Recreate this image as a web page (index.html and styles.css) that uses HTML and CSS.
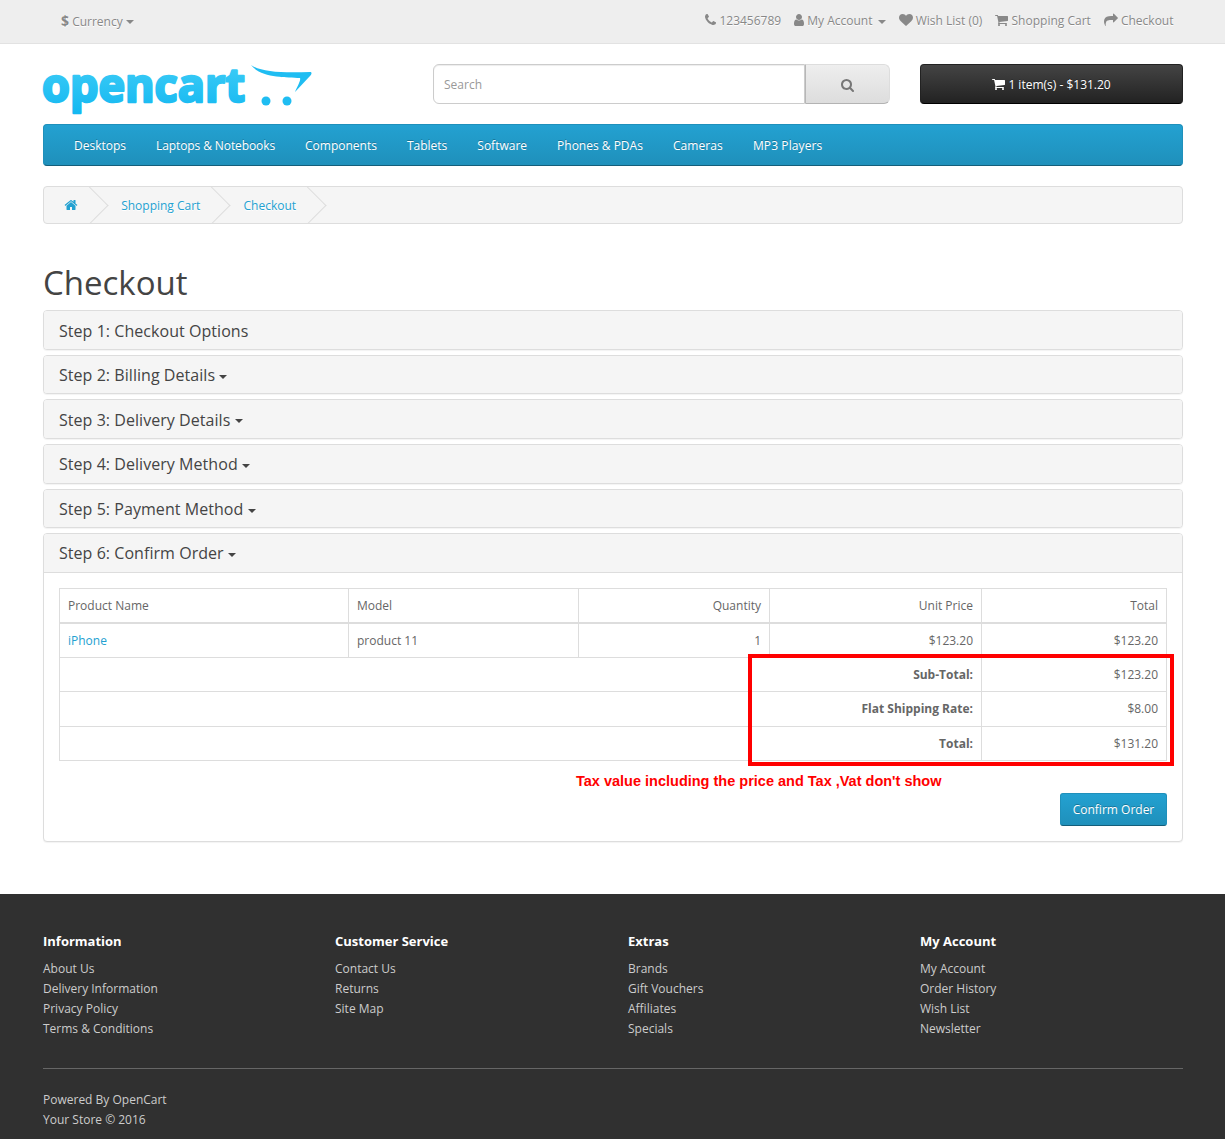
FILE: index.html
```html
<!DOCTYPE html>
<html lang="en">
<head>
    <meta charset="UTF-8">
    <meta name="viewport" content="width=device-width, initial-scale=1.0">
    <title>Checkout</title>
    <link rel="stylesheet" href="styles.css">
</head>
<body>
    <svg class="icon-defs" aria-hidden="true">
        <symbol id="i-phone" viewBox="192 0 1408 1792"><path d="M1600 1240q0 27-10 70.5t-21 68.5q-21 50-122 106-94 51-186 51-27 0-53-3.5t-57.5-12.5-47-14.5-55.5-20.5-49-18q-98-35-175-83-127-79-264-216t-216-264q-48-77-83-175-3-9-18-49t-20.5-55.5-14.5-47-12.5-57.5-3.5-53q0-92 51-186 56-101 106-122 25-11 68.5-21t70.5-10q14 0 21 3 18 6 53 76 11 19 30 54t35 63.5 31 53.5q3 4 17.5 25t21.5 35.5 7 28.5q0 20-28.5 50t-62 55-62 53-28.5 46q0 9 5 22.5t8.5 20.5 14 24 11.5 19q76 137 174 235t235 174q2 1 19 11.5t24 14 20.5 8.5 22.5 5q18 0 46-28.5t53-62 55-62 50-28.5q14 0 28.5 7t35.5 21.5 25 17.5q25 15 53.5 31t63.5 35 54 30q70 35 76 53 3 7 3 21z"/></symbol>
        <symbol id="i-user" viewBox="256 0 1280 1792"><path d="M1536 1399q0 109-62.5 187t-150.5 78h-854q-88 0-150.5-78t-62.5-187q0-85 8.5-160.5t31.5-152 58.5-131 94-89 134.5-34.5q131 128 313 128t313-128q76 0 134.5 34.5t94 89 58.5 131 31.5 152 8.5 160.5zm-256-887q0 159-112.5 271.5t-271.5 112.5-271.5-112.5-112.5-271.5 112.5-271.5 271.5-112.5 271.5 112.5 112.5 271.5z"/></symbol>
        <symbol id="i-heart" viewBox="0 0 1792 1792"><path d="M896 1664q-26 0-44-18l-624-602q-10-8-27.5-26t-55.5-65.5-68-97.5-53.5-121-23.5-138q0-220 127-344t351-124q62 0 126.5 21.5t120 58 95.5 68.5 76 68q36-36 76-68t95.5-68.5 120-58 126.5-21.5q224 0 351 124t127 344q0 221-229 450l-623 600q-18 18-44 18z"/></symbol>
        <symbol id="i-cart" viewBox="64 0 1664 1792"><path d="M704 1536q0 52-38 90t-90 38-90-38-38-90 38-90 90-38 90 38 38 90zm896 0q0 52-38 90t-90 38-90-38-38-90 38-90 90-38 90 38 38 90zm128-1088v512q0 24-16.5 42.5t-40.5 21.5l-1044 122q13 60 13 70 0 16-24 64h920q26 0 45 19t19 45-19 45-45 19h-1024q-26 0-45-19t-19-45q0-11 8-31.5t16-36 21.5-40 15.5-29.5l-177-823h-204q-26 0-45-19t-19-45 19-45 45-19h256q16 0 28.5 6.5t19.5 15.5 13 24.5 8 26 5.5 29.5 4.5 26h1201q26 0 45 19t19 45z"/></symbol>
        <symbol id="i-share" viewBox="0 0 1792 1792"><path d="M1792 640q0 26-19 45l-512 512q-19 19-45 19t-45-19-19-45v-256h-224q-98 0-175.5 6t-154 21.5-133 42.5-105.5 69.5-80 101-48.5 138.5-17.5 181q0 55 5 123 0 6 2.5 23.5t2.5 26.5q0 15-8.5 25t-23.5 10q-16 0-28-17-7-9-13-22t-13.5-30-10.5-24q-127-285-127-451 0-199 53-333 162-403 875-403h224v-256q0-26 19-45t45-19 45 19l512 512q19 19 19 45z"/></symbol>
        <symbol id="i-search" viewBox="64 0 1664 1792"><path d="M1216 832q0-185-131.5-316.5t-316.5-131.5-316.5 131.5-131.5 316.5 131.5 316.5 316.5 131.5 316.5-131.5 131.5-316.5zm512 832q0 52-38 90t-90 38q-54 0-90-38l-343-342q-179 124-399 124-143 0-273.5-55.5t-225-150-150-225-55.5-273.5 55.5-273.5 150-225 225-150 273.5-55.5 273.5 55.5 225 150 150 225 55.5 273.5q0 220-124 399l343 343q37 37 37 90z"/></symbol>
        <symbol id="i-home" viewBox="64 0 1664 1792"><path d="M1472 992v480q0 26-19 45t-45 19h-384v-384h-256v384h-384q-26 0-45-19t-19-45v-480q0-1 .5-3t.5-3l575-474 575 474q1 2 1 6zm223-69l-62 74q-8 9-21 11h-3q-13 0-21-7l-692-577-692 577q-12 8-24 7-13-2-21-11l-62-74q-8-10-7-23.5t11-21.5l719-599q32-26 76-26t76 26l244 204v-195q0-14 9-23t23-9h192q14 0 23 9t9 23v408l219 182q10 8 11 21.5t-7 23.5z"/></symbol>
    </svg>

    <!-- Top bar -->
    <nav id="top">
        <div class="container top-inner">
            <a class="currency" href="#"><strong class="currency-sign">$</strong> Currency <span class="caret"></span></a>
            <ul class="top-links">
                <li><svg class="icon icon-phone"><use href="#i-phone"/></svg> 123456789</li>
                <li><svg class="icon icon-user"><use href="#i-user"/></svg> My Account <span class="caret caret-account"></span></li>
                <li><svg class="icon icon-heart"><use href="#i-heart"/></svg> Wish List (0)</li>
                <li><svg class="icon icon-cart"><use href="#i-cart"/></svg> Shopping Cart</li>
                <li><svg class="icon icon-share"><use href="#i-share"/></svg> Checkout</li>
            </ul>
        </div>
    </nav>

    <!-- Header -->
    <header class="container site-header">
        <div class="logo-col">
            <svg class="logo" viewBox="0 0 270 50" role="img" aria-label="opencart">
                <defs>
                    <linearGradient id="logo-fill" gradientUnits="userSpaceOnUse" x1="0" y1="0" x2="0" y2="48">
                        <stop offset="0" stop-color="#3ccbf6"/>
                        <stop offset="1" stop-color="#14b8f1"/>
                    </linearGradient>
                </defs>
                <text class="logo-word" x="-1" y="37" textLength="203" lengthAdjust="spacingAndGlyphs">opencart</text>
                <path class="logo-cart" d="M208 0C218 7 238 8 267 7C269 7 269 9 267 11L252 27C255 20 258 15 257 13C243 12 218 13 208 0Z"/>
                <circle class="logo-cart" cx="223" cy="36" r="4.5"/>
                <circle class="logo-cart" cx="244" cy="36" r="4.5"/>
            </svg>
        </div>
        <div class="search-col">
            <div class="search">
                <input class="search-input" type="text" placeholder="Search">
                <button class="search-btn" title="Search"><svg class="icon icon-search"><use href="#i-search"/></svg></button>
            </div>
        </div>
        <div class="cart-col">
            <button class="cart-btn"><svg class="icon icon-cart"><use href="#i-cart"/></svg> 1 item(s) - $131.20</button>
        </div>
    </header>

    <div class="container">
        <!-- Main menu -->
        <nav id="menu">
            <a href="#">Desktops</a>
            <a class="menu-tight" href="#">Laptops &amp; Notebooks</a>
            <a href="#">Components</a>
            <a href="#">Tablets</a>
            <a href="#">Software</a>
            <a href="#">Phones &amp; PDAs</a>
            <a class="menu-wide" href="#">Cameras</a>
            <a class="menu-wide" href="#">MP3 Players</a>
        </nav>

        <ul class="breadcrumb">
            <li><a href="#"><svg class="icon icon-home"><use href="#i-home"/></svg></a></li>
            <li><a href="#">Shopping Cart</a></li>
            <li><a href="#">Checkout</a></li>
        </ul>

        <h1 class="page-title">Checkout</h1>

        <section class="panel"><h4 class="panel-title">Step 1: Checkout Options</h4></section>
        <section class="panel"><h4 class="panel-title">Step 2: Billing Details <span class="caret"></span></h4></section>
        <section class="panel"><h4 class="panel-title">Step 3: Delivery Details <span class="caret"></span></h4></section>
        <section class="panel"><h4 class="panel-title">Step 4: Delivery Method <span class="caret"></span></h4></section>
        <section class="panel"><h4 class="panel-title">Step 5: Payment Method <span class="caret"></span></h4></section>
        <section class="panel panel-open">
            <h4 class="panel-title">Step 6: Confirm Order <span class="caret"></span></h4>
            <div class="panel-body">
                <table class="order-table">
                    <colgroup>
                        <col class="col-name"><col class="col-model"><col class="col-qty"><col class="col-price"><col class="col-total">
                    </colgroup>
                    <thead>
                        <tr>
                            <td>Product Name</td>
                            <td>Model</td>
                            <td class="text-right">Quantity</td>
                            <td class="text-right">Unit Price</td>
                            <td class="text-right">Total</td>
                        </tr>
                    </thead>
                    <tbody>
                        <tr>
                            <td><a href="#">iPhone</a></td>
                            <td>product 11</td>
                            <td class="text-right">1</td>
                            <td class="text-right">$123.20</td>
                            <td class="text-right">$123.20</td>
                        </tr>
                    </tbody>
                    <tfoot>
                        <tr><td colspan="4" class="text-right"><strong>Sub-Total:</strong></td><td class="text-right">$123.20</td></tr>
                        <tr class="row-tall"><td colspan="4" class="text-right"><strong>Flat Shipping Rate:</strong></td><td class="text-right">$8.00</td></tr>
                        <tr><td colspan="4" class="text-right"><strong>Total:</strong></td><td class="text-right">$131.20</td></tr>
                    </tfoot>
                </table>
                <div class="highlight-box"></div>
                <p class="annotation">Tax value including the price and Tax ,Vat don't show</p>
                <div class="buttons">
                    <button class="confirm-btn">Confirm Order</button>
                </div>
            </div>
        </section>
    </div>

    <!-- Footer -->
    <footer class="site-footer">
        <div class="container">
            <div class="footer-cols">
                <div class="footer-col">
                    <h5>Information</h5>
                    <ul>
                        <li><a href="#">About Us</a></li>
                        <li><a href="#">Delivery Information</a></li>
                        <li><a href="#">Privacy Policy</a></li>
                        <li><a href="#">Terms &amp; Conditions</a></li>
                    </ul>
                </div>
                <div class="footer-col">
                    <h5>Customer Service</h5>
                    <ul>
                        <li><a href="#">Contact Us</a></li>
                        <li><a href="#">Returns</a></li>
                        <li><a href="#">Site Map</a></li>
                    </ul>
                </div>
                <div class="footer-col">
                    <h5>Extras</h5>
                    <ul>
                        <li><a href="#">Brands</a></li>
                        <li><a href="#">Gift Vouchers</a></li>
                        <li><a href="#">Affiliates</a></li>
                        <li><a href="#">Specials</a></li>
                    </ul>
                </div>
                <div class="footer-col">
                    <h5>My Account</h5>
                    <ul>
                        <li><a href="#">My Account</a></li>
                        <li><a href="#">Order History</a></li>
                        <li><a href="#">Wish List</a></li>
                        <li><a href="#">Newsletter</a></li>
                    </ul>
                </div>
            </div>
            <hr class="footer-rule">
            <p class="powered">Powered By <a href="#">OpenCart</a><br>Your Store &copy; 2016</p>
        </div>
    </footer>
</body>
</html>
```

FILE: styles.css
```css
/* General Reset */
* {
    box-sizing: border-box;
}

body {
    margin: 0;
    font-family: "Open Sans", sans-serif;
    font-size: 12px;
    line-height: 20px;
    color: #666;
    background-color: #fff;
}

a {
    color: #23a1d1;
    text-decoration: none;
}

ul {
    list-style: none;
    margin: 0;
    padding: 0;
}

button {
    font-family: inherit;
    cursor: pointer;
}

.container {
    width: 1170px;
    margin: 0 27px 0 28px;
    padding: 0 15px;
}

.icon-defs {
    display: none;
}

/* Icons */
.icon {
    display: inline-block;
    height: 14px;
    vertical-align: -2px;
    fill: currentColor;
}

.icon-phone { width: 11px; }
.icon-user { width: 10px; }
.icon-heart { width: 14px; }
.icon-cart { width: 13px; }
.icon-share { width: 14px; }
.icon-search { width: 13px; }
.icon-home { width: 14px; }

.caret {
    display: inline-block;
    width: 0;
    height: 0;
    vertical-align: middle;
    border-top: 4px solid;
    border-right: 4px solid transparent;
    border-left: 4px solid transparent;
}

/* Top Bar */
#top {
    background-color: #eee;
    border-bottom: 1px solid #e2e2e2;
    padding: 3px 0 4px;
    min-height: 44px;
    margin-bottom: 20px;
    color: #888;
    text-shadow: 0 1px 0 #fff;
}

.top-inner {
    display: flex;
    justify-content: space-between;
    align-items: center;
    height: 36px;
}

.currency {
    color: #888;
    margin-left: 18px;
}

.currency-sign {
    font-size: 14px;
}

.top-links {
    display: flex;
    gap: 13px;
    padding-right: 9.5px;
}

.caret-account {
    margin-left: 2px;
}

/* Header */
.site-header {
    display: grid;
    grid-template-columns: 390px 487px 293px;
    padding: 0;
    height: 60px;
}

.logo-col,
.search-col,
.cart-col {
    padding: 0 15px;
}

.logo {
    display: block;
    width: 270px;
    height: 50px;
    margin-top: 1px;
    overflow: visible;
}

.logo-word {
    font-family: "Open Sans", sans-serif;
    font-size: 46px;
    font-weight: 700;
    fill: url(#logo-fill);
    stroke: url(#logo-fill);
    stroke-width: 2.5px;
    stroke-linejoin: round;
}

.logo-cart {
    fill: #1fbdf2;
}

.search {
    display: flex;
    height: 40px;
}

.search-input {
    flex: 1;
    min-width: 0;
    padding: 10px;
    font-family: inherit;
    font-size: 12px;
    color: #555;
    border: 1px solid #ccc;
    border-radius: 6px 0 0 6px;
    box-shadow: inset 0 1px 1px rgba(0, 0, 0, 0.075);
    outline: none;
}

.search-input::placeholder {
    color: #999;
}

.search-btn {
    width: 85px;
    font-size: 15px;
    color: #777;
    background-image: linear-gradient(to bottom, #eee, #ddd);
    border: 1px solid #ddd;
    border-color: #ddd #ddd #b3b3b3 #b7b7b7;
    border-radius: 0 6px 6px 0;
    text-shadow: 0 1px 0 #fff;
}

.cart-btn {
    display: block;
    width: 100%;
    height: 40px;
    font-size: 12px;
    color: #fff;
    background-image: linear-gradient(to bottom, #444, #222);
    border: 1px solid #222;
    border-bottom-color: #000;
    border-radius: 4px;
    text-shadow: 0 -1px 0 rgba(0, 0, 0, 0.25);
}

/* Menu */
#menu {
    display: flex;
    gap: 30px;
    height: 42px;
    padding: 2px 30px 0;
    margin-bottom: 20px;
    align-items: center;
    background-color: #229ac8;
    background-image: linear-gradient(to bottom, #23a1d1, #1f90bb);
    border: 1px solid #1f90bb;
    border-bottom-color: #145e7a;
    border-radius: 4px;
}

#menu a {
    color: #fff;
    text-shadow: 0 -1px 0 rgba(0, 0, 0, 0.25);
}

#menu .menu-tight {
    letter-spacing: -0.1px;
}

#menu .menu-wide {
    letter-spacing: 0.1px;
}

/* Breadcrumb */
.breadcrumb {
    padding: 9px 0 7px;
    height: 38px;
    overflow: hidden;
    background-color: #f5f5f5;
    border: 1px solid #ddd;
    border-radius: 4px;
}

.breadcrumb li {
    display: inline-block;
    position: relative;
    padding: 0 20px;
    white-space: nowrap;
    text-shadow: 0 1px 0 #fff;
}

.breadcrumb li::after {
    content: '';
    display: block;
    position: absolute;
    top: -4px;
    right: -5px;
    width: 26px;
    height: 26px;
    border-right: 1px solid #ddd;
    border-bottom: 1px solid #ddd;
    transform: rotate(-45deg);
}

.page-title {
    margin: 41px 0 9px;
    font-size: 33px;
    font-weight: 400;
    line-height: 1.1;
    color: #444;
}

/* Panels */
.panel {
    margin-bottom: 5px;
    border: 1px solid #ddd;
    border-radius: 4px;
    box-shadow: 0 1px 1px rgba(0, 0, 0, 0.05);
    background-color: #fff;
}

.panel-title {
    margin: 0;
    padding: 11.3px 15px 8.7px;
    font-size: 16px;
    font-weight: 400;
    line-height: 1.1;
    letter-spacing: 0.05px;
    color: #444;
    background-color: #f5f5f5;
    border-radius: 3px;
}

.panel-open {
    margin-bottom: 52px;
}

.panel-open .panel-title {
    border-bottom: 1px solid #ddd;
    border-radius: 3px 3px 0 0;
}

.panel-body {
    position: relative;
    padding: 15px;
}

/* Order Table */
.order-table {
    width: 1107px;
    table-layout: fixed;
    border-collapse: collapse;
    line-height: 17px;
    margin-bottom: 32px;
}

.col-name { width: 289px; }
.col-model { width: 230px; }
.col-qty { width: 191px; }
.col-price { width: 212px; }
.col-total { width: 185px; }

.order-table td {
    padding: 8px;
    border: 1px solid #ddd;
}

.order-table thead td {
    border-bottom-width: 2px;
}

.order-table .row-tall td {
    height: 35px;
}

.text-right {
    text-align: right;
}

.highlight-box {
    position: absolute;
    top: 81px;
    left: 704px;
    width: 426px;
    height: 112px;
    border: 4px solid #f00;
    pointer-events: none;
}

.annotation {
    position: absolute;
    top: 198px;
    left: 532px;
    margin: 0;
    font-family: "Liberation Sans", Arial, sans-serif;
    font-size: 14.5px;
    font-weight: 700;
    color: #f00;
    white-space: nowrap;
}

.buttons {
    display: flex;
    justify-content: flex-end;
}

.confirm-btn {
    width: 107px;
    height: 33px;
    padding: 0;
    font-size: 12px;
    color: #fff;
    background-color: #229ac8;
    background-image: linear-gradient(to bottom, #23a1d1, #1f90bb);
    border: 1px solid #1f90bb;
    border-bottom-color: #145e7a;
    border-radius: 3px;
    text-shadow: 0 -1px 0 rgba(0, 0, 0, 0.25);
}

/* Footer */
.site-footer {
    padding-top: 30px;
    background-color: #303030;
    color: #e2e2e2;
    height: 245px;
}

.site-footer a {
    color: #ccc;
}

.footer-cols {
    display: grid;
    grid-template-columns: 292px 293px 292px 293px;
    margin: 0 -15px;
}

.footer-col {
    padding: 0 15px;
}

.footer-col h5 {
    margin: 10px 0 11px;
    font-size: 13px;
    font-weight: 700;
    line-height: 1.1;
    color: #fff;
}

.footer-rule {
    margin: 29px 0 21px;
    border: 0;
    border-top: 1px solid #666;
}

.powered {
    margin: 0;
    color: #ccc;
}
```
